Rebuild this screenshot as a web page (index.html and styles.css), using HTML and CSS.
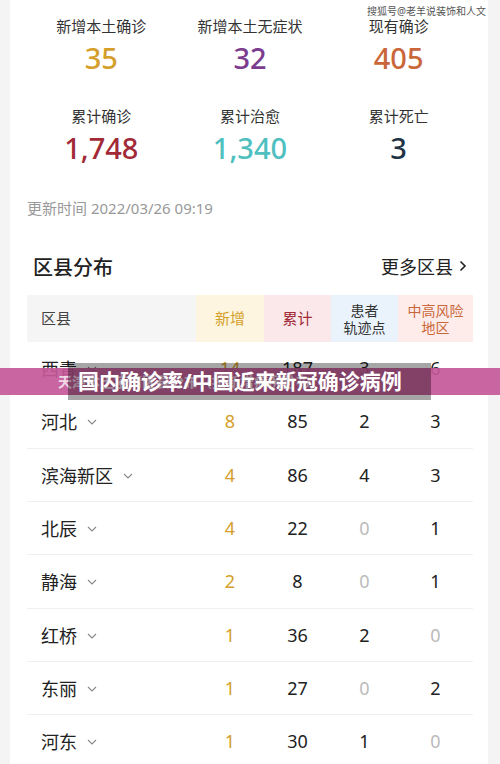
FILE: index.html
```html
<!DOCTYPE html>
<html lang="zh-CN">
  <head>
    <meta charset="UTF-8" />
    <meta name="viewport" content="width=device-width, initial-scale=1" />
    <title>区县分布</title>
    <link rel="stylesheet" href="styles.css">
  </head>
  <body>
    <div class="card">
      <div class="stats">
        <div class="stat"><div class="stat-label">新增本土确诊</div><div class="stat-num gold">35</div></div>
        <div class="stat"><div class="stat-label">新增本土无症状</div><div class="stat-num purple">32</div></div>
        <div class="stat"><div class="stat-label">现有确诊</div><div class="stat-num orange">405</div></div>
        <div class="stat"><div class="stat-label">累计确诊</div><div class="stat-num red">1,748</div></div>
        <div class="stat"><div class="stat-label">累计治愈</div><div class="stat-num teal">1,340</div></div>
        <div class="stat"><div class="stat-label">累计死亡</div><div class="stat-num navy">3</div></div>
      </div>

      <p class="update-time">更新时间 2022/03/26 09:19</p>

      <div class="section-head">
        <h2>区县分布</h2>
        <a class="more">更多区县
          <svg width="8" height="12" viewBox="0 0 8 12"><polyline points="1.5,1.5 6,6 1.5,10.5" fill="none" stroke="#222" stroke-width="1.6"/></svg>
        </a>
      </div>

      <div class="table">
        <div class="th th-name">区县</div>
        <div class="th th-new">新增</div>
        <div class="th th-total">累计</div>
        <div class="th th-track">患者<br>轨迹点</div>
        <div class="th th-risk">中高风险<br>地区</div>
      </div>
      <div id="rows"></div>
    </div>

    <div class="watermark">搜狐号@老羊说装饰和人文</div>

    <div class="banner">
      <div class="banner-stripe">天津本土疫情区县分布（按新增病例分布)</div>
      <div class="banner-box">国内确诊率/中国近来新冠确诊病例</div>
    </div>

    <script>
      const rows = [
        ['西青', 14, 187, 3, 6],
        ['河北', 8, 85, 2, 3],
        ['滨海新区', 4, 86, 4, 3],
        ['北辰', 4, 22, 0, 1],
        ['静海', 2, 8, 0, 1],
        ['红桥', 1, 36, 2, 0],
        ['东丽', 1, 27, 0, 2],
        ['河东', 1, 30, 1, 0]
      ];
      const chevron = '<svg class="chev" width="10" height="6" viewBox="0 0 10 6"><polyline points="1,1 5,5 9,1" fill="none" stroke="#888" stroke-width="1.1"/></svg>';
      const box = document.getElementById('rows');
      rows.forEach(([name, add, total, track, risk]) => {
        const row = document.createElement('div');
        row.className = 'row';
        const cell = (v, cls) => `<div class="td ${v === 0 ? 'zero' : cls}">${v}</div>`;
        row.innerHTML =
          `<div class="td td-name">${name}${chevron}</div>` +
          cell(add, 'gold') + cell(total, '') + cell(track, '') + cell(risk, '');
        box.appendChild(row);
      });
    </script>
  </body>
</html>
```

FILE: styles.css
```css
* {
  box-sizing: border-box;
  margin: 0;
  padding: 0;
}
body {
  background: #f4f4f4;
  color: #222;
  font-family: 'Noto Sans', 'Noto Sans CJK SC', sans-serif;
  width: 500px;
  height: 764px;
  overflow: hidden;
  position: relative;
}
.card {
  background: #fff;
  margin: 0 12px 0 10px;
  padding: 15px 15px 0 17px;
  height: 764px;
}
.stats {
  display: grid;
  grid-template-columns: repeat(3, 1fr);
  row-gap: 27px;
  text-align: center;
}
.stat-label {
  font-size: 15px;
  line-height: 22px;
  color: #333;
}
.stat-num {
  margin-top: 1px;
  font-size: 29px;
  line-height: 40px;
  font-weight: 500;
}
.gold { color: #d4a02b; }
.purple { color: #7c3d8e; }
.orange { color: #c9663a; }
.red { color: #a12a36; }
.teal { color: #4fbfbf; }
.navy { color: #1f3344; }

.update-time {
  margin-top: 29px;
  font-size: 15px;
  line-height: 22px;
  color: #999;
}
.section-head {
  display: flex;
  justify-content: space-between;
  align-items: center;
  margin-top: 32px;
  padding: 0 6px 0 6px;
  height: 30px;
}
.section-head h2 {
  font-size: 20px;
  font-weight: 500;
  color: #222;
}
.more {
  display: flex;
  align-items: center;
  gap: 6px;
  font-size: 18px;
  color: #222;
}
.table {
  display: grid;
  grid-template-columns: 169px 68px 67px 67px 75px;
  margin-top: 14px;
  height: 47px;
}
.th {
  display: flex;
  align-items: center;
  justify-content: center;
  text-align: center;
  font-size: 14px;
  line-height: 17px;
}
.th-name { background: #f5f5f5; justify-content: flex-start; padding-left: 14px; color: #444; font-size: 15px; }
.th-new { background: #fdf5df; color: #d4a02b; font-size: 15px; }
.th-total { background: #fbe8ea; color: #a12a36; font-size: 15px; }
.th-track { background: #eaf2fc; color: #333; }
.th-risk { background: #fdecea; color: #c9663a; }

.row {
  display: grid;
  grid-template-columns: 169px 68px 67px 67px 75px;
  height: 53.33px;
  border-bottom: 1px solid #efefef;
  align-items: center;
  text-align: center;
  font-size: 18px;
}
.td-name {
  text-align: left;
  padding-left: 14px;
  display: flex;
  align-items: center;
  gap: 10px;
}
.td.zero { color: #bbb; }
.chev { margin-top: 2px; }

.watermark {
  position: absolute;
  top: 3px;
  left: 367px;
  font-size: 10px;
  line-height: 16px;
  color: #555;
  white-space: nowrap;
}
.banner {
  position: absolute;
  left: 0;
  top: 363px;
  width: 500px;
  height: 37px;
}
.banner-stripe {
  position: absolute;
  left: 0;
  top: 5px;
  width: 500px;
  height: 27px;
  background: rgba(196, 88, 152, 0.92);
  color: rgba(255, 255, 255, 0.75);
  font-size: 14px;
  font-weight: 700;
  line-height: 27px;
  padding-left: 58px;
  white-space: nowrap;
}
.banner-box {
  position: absolute;
  left: 68px;
  top: 0;
  width: 363px;
  height: 37px;
  background: rgba(0, 0, 0, 0.35);
  color: #fff;
  font-size: 21px;
  font-weight: 700;
  line-height: 37px;
  padding-left: 10px;
  white-space: nowrap;
}
```
